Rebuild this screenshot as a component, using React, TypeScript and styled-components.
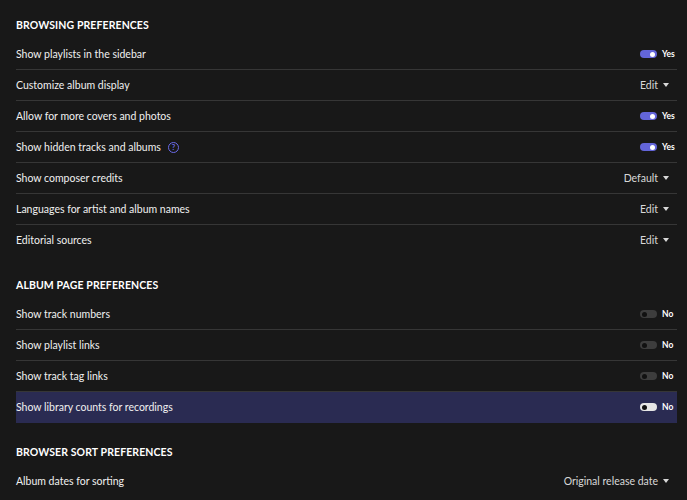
import React from "react";
import styled, { createGlobalStyle } from "styled-components";

const Global = createGlobalStyle`
  body { margin: 0; background: #181818; font-family: Lato, "Open Sans", sans-serif; color: #e8e8e8; }
`;

const Page = styled.div`
  padding: 17px 10px 0 16px;
`;
const Section = styled.section`
  margin-bottom: 21px;
`;
const Title = styled.h2`
  margin: 0;
  height: 16px;
  line-height: 16px;
  font-size: 10.5px;
  font-weight: 700;
  color: #fff;
  letter-spacing: 0.1px;
  margin-bottom: 6px;
`;
const Row = styled.div<{ $hl?: boolean; $last?: boolean }>`
  display: flex;
  align-items: center;
  justify-content: space-between;
  height: 30px;
  border-bottom: 1.7px solid ${(p) => (p.$last || p.$hl ? "transparent" : "#363636")};
  background: ${(p) => (p.$hl ? "#2a2b52" : "transparent")};
  font-size: 10.5px;
  color: #f0f0f0;
  padding-right: 2px;
`;
const Label = styled.span`
  display: flex;
  align-items: center;
  gap: 7px;
`;
const Help = styled.span`
  width: 9px;
  height: 9px;
  border: 1.3px solid #6a6ae8;
  border-radius: 50%;
  color: #6a6ae8;
  font-size: 7.5px;
  font-weight: 700;
  display: inline-flex;
  align-items: center;
  justify-content: center;
`;
const Control = styled.span`
  display: flex;
  align-items: center;
  gap: 5px;
  font-size: 10.5px;
  color: #d8d8d8;
`;
const Track = styled.span<{ $on: boolean; $hl?: boolean }>`
  width: 17px;
  height: 8px;
  border-radius: 4px;
  background: ${(p) => (p.$on ? "#6365d9" : p.$hl ? "#e6e6e6" : "#3d3d3d")};
  position: relative;
  &::after {
    content: "";
    position: absolute;
    top: 1.5px;
    ${(p) => (p.$on ? "right: 2px;" : "left: 2px;")}
    width: 5px;
    height: 5px;
    border-radius: 50%;
    background: ${(p) => (p.$on ? "#fff" : "#111")};
  }
`;
const ToggleText = styled.span`
  font-size: 8.5px;
  font-weight: 700;
  color: #fff;
  width: 13px;
`;
const Caret = styled.span`
  width: 0;
  height: 0;
  border-left: 3.5px solid transparent;
  border-right: 3.5px solid transparent;
  border-top: 4px solid #d8d8d8;
  margin-right: 6px;
`;

type Item = { label: string; toggle?: boolean; value?: string; help?: boolean; hl?: boolean };

const Toggle = ({ on, hl }: { on: boolean; hl?: boolean }) => (
  <Control>
    <Track $on={on} $hl={hl} />
    <ToggleText>{on ? "Yes" : "No"}</ToggleText>
  </Control>
);

const sections: { title: string; items: Item[] }[] = [
  {
    title: "BROWSING PREFERENCES",
    items: [
      { label: "Show playlists in the sidebar", toggle: true },
      { label: "Customize album display", value: "Edit" },
      { label: "Allow for more covers and photos", toggle: true },
      { label: "Show hidden tracks and albums", toggle: true, help: true },
      { label: "Show composer credits", value: "Default" },
      { label: "Languages for artist and album names", value: "Edit" },
      { label: "Editorial sources", value: "Edit" },
    ],
  },
  {
    title: "ALBUM PAGE PREFERENCES",
    items: [
      { label: "Show track numbers", toggle: false },
      { label: "Show playlist links", toggle: false },
      { label: "Show track tag links", toggle: false },
      { label: "Show library counts for recordings", toggle: false, hl: true },
    ],
  },
  {
    title: "BROWSER SORT PREFERENCES",
    items: [{ label: "Album dates for sorting", value: "Original release date" }],
  },
];

export default function App() {
  return (
    <Page>
      <Global />
      {sections.map((s) => (
        <Section key={s.title}>
          <Title>{s.title}</Title>
          {s.items.map((it, i) => (
            <Row key={it.label} $hl={it.hl} $last={i === s.items.length - 1}>
              <Label>
                {it.label}
                {it.help && <Help>?</Help>}
              </Label>
              {it.value !== undefined ? (
                <Control>
                  {it.value}
                  <Caret />
                </Control>
              ) : (
                <Toggle on={!!it.toggle} hl={it.hl} />
              )}
            </Row>
          ))}
        </Section>
      ))}
    </Page>
  );
}
